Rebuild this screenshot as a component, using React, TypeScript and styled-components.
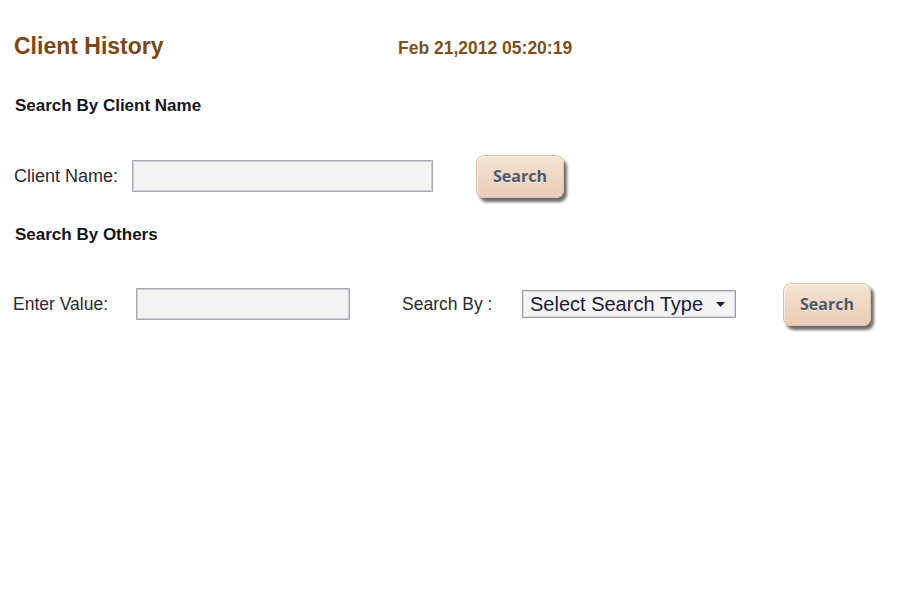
import React from "react";
import styled, { createGlobalStyle } from "styled-components";

const GlobalStyle = createGlobalStyle`
  html, body { margin: 0; padding: 0; background: #ffffff; }
  body { font-family: "Liberation Sans", Arial, sans-serif; }
`;

const Page = styled.div`
  width: 900px;
  height: 600px;
  box-sizing: border-box;
  padding: 31px 0 0 14px;
  display: flex;
  flex-direction: column;
`;

const Header = styled.div`
  display: flex;
  align-items: flex-start;
  height: 26px;
`;

const Title = styled.h1`
  margin: 4px 0 0 0;
  width: 384px;
  font-size: 23px;
  line-height: 22px;
  font-weight: 700;
  color: #7a4814;
`;

const DateText = styled.div`
  margin-top: 8px;
  font-size: 17.5px;
  line-height: 18px;
  font-weight: 700;
  color: #7a5222;
`;

const SectionHeading = styled.h2<{ $top: number }>`
  margin: ${(p) => p.$top}px 0 0 1px;
  font-size: 17px;
  line-height: 17px;
  font-weight: 700;
  color: #14141c;
`;

const Row = styled.div<{ $top: number }>`
  margin-top: ${(p) => p.$top}px;
  display: flex;
  align-items: center;
  height: 44px;
`;

const Label = styled.label<{ $width: number; $shift?: number; $size?: number }>`
  width: ${(p) => p.$width}px;
  margin-left: ${(p) => p.$shift ?? 0}px;
  flex: none;
  font-size: ${(p) => p.$size ?? 17.5}px;
  line-height: 18px;
  color: #2a2a33;
`;

const TextInput = styled.input<{ $width: number }>`
  width: ${(p) => p.$width}px;
  height: 32px;
  box-sizing: border-box;
  flex: none;
  border: 1px solid #a7adb3;
  box-shadow: inset 0 0 0 1px #c9cdd1;
  background: #f3f3f3;
  outline: none;
  padding: 0 4px;
  font-family: "Liberation Sans", Arial, sans-serif;
  font-size: 16px;
`;

const SearchButton = styled.button<{ $gap: number }>`
  margin-left: ${(p) => p.$gap}px;
  width: 88px;
  height: 43px;
  flex: none;
  border: 1px solid #d9bfa8;
  border-radius: 8px;
  background: linear-gradient(180deg, #f6e4d4 0%, #f0d8c4 45%, #eacdb6 100%);
  box-shadow: 3px 4px 3px rgba(30, 30, 30, 0.65), inset 1px 1px 0 rgba(255, 255, 255, 0.6);
  font-family: "Open Sans", "DejaVu Sans", sans-serif;
  font-weight: 700;
  font-size: 16px;
  color: #4b5869;
  text-shadow: 0 1px 0 rgba(255, 255, 255, 0.5);
  padding: 0;
  cursor: pointer;
`;

const Spacer = styled.div<{ $width: number }>`
  width: ${(p) => p.$width}px;
  flex: none;
`;

const SelectBox = styled.div`
  width: 214px;
  height: 28px;
  box-sizing: border-box;
  flex: none;
  border: 1px solid #9ba1a8;
  box-shadow: inset 0 0 0 1px #d6d9dc;
  background: #f4f4f4;
  display: flex;
  align-items: center;
  justify-content: space-between;
  padding: 0 10px 0 7px;
  font-size: 20px;
  color: #1b1b3c;
`;

const Arrow = styled.svg`
  width: 9px;
  height: 5px;
  margin-top: 1px;
`;

export default function App() {
  return (
    <>
      <GlobalStyle />
      <Page>
        <Header>
          <Title>Client History</Title>
          <DateText>Feb 21,2012 05:20:19</DateText>
        </Header>

        <SectionHeading $top={40}>Search By Client Name</SectionHeading>
        <Row $top={40}>
          <Label $width={118} $size={18}>Client Name:</Label>
          <TextInput $width={301} />
          <SearchButton $gap={43}>Search</SearchButton>
        </Row>

        <SectionHeading $top={28}>Search By Others</SectionHeading>
        <Row $top={39}>
          <Label $width={123} $shift={-1}>Enter Value:</Label>
          <TextInput $width={214} />
          <Spacer $width={52} />
          <Label $width={120}>Search By :</Label>
          <SelectBox>
            <span>Select Search Type</span>
            <Arrow viewBox="0 0 9 5">
              <polygon points="0,0 9,0 4.5,5" fill="#1b1b4a" />
            </Arrow>
          </SelectBox>
          <SearchButton $gap={47}>Search</SearchButton>
        </Row>
      </Page>
    </>
  );
}
